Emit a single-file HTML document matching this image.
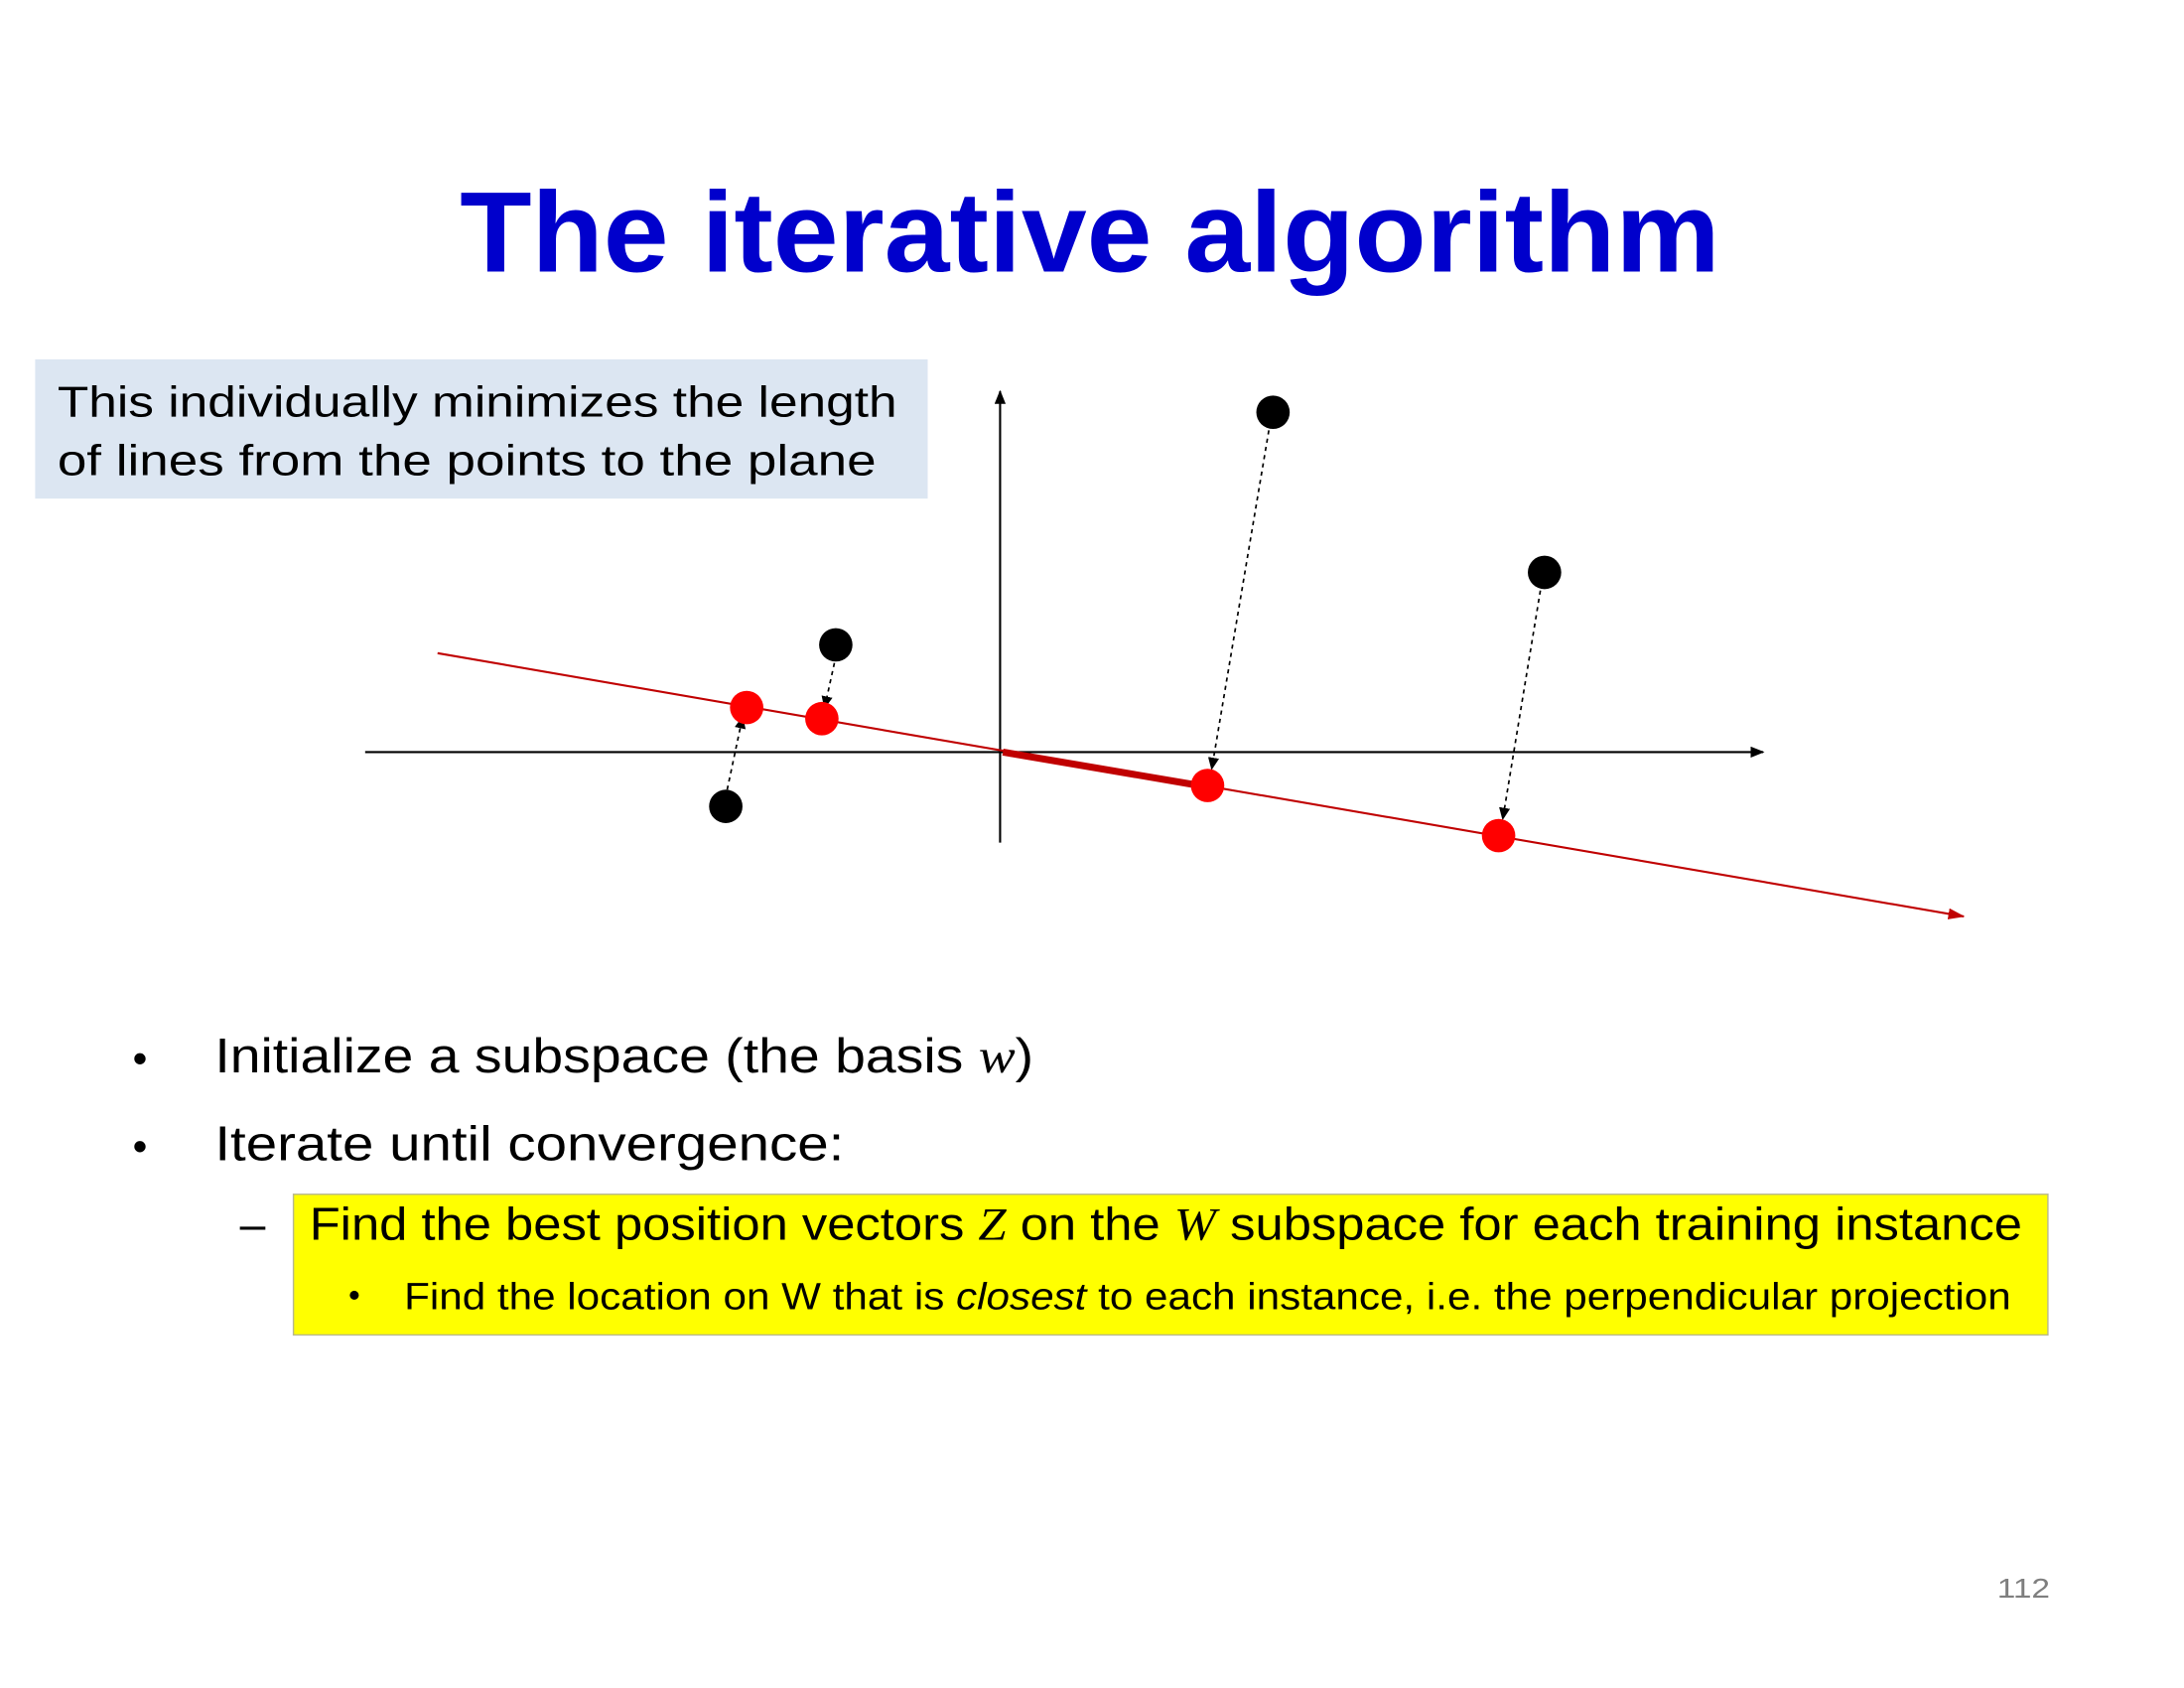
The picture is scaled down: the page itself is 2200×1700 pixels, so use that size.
<!DOCTYPE html>
<html><head><meta charset="utf-8"><style>
html,body{margin:0;padding:0;background:#fff;width:2200px;height:1700px;overflow:hidden}
svg{display:block}
text{font-family:"Liberation Sans",sans-serif}
</style></head><body>
<svg width="2200" height="1700" viewBox="0 0 1568 1212" xmlns="http://www.w3.org/2000/svg">
<defs>
<marker id="ak" markerWidth="10" markerHeight="8" refX="9" refY="4" orient="auto" markerUnits="userSpaceOnUse"><path d="M0,0 L10,4 L0,8z" fill="#000"/></marker>
<marker id="ar" markerWidth="12" markerHeight="8" refX="11" refY="4" orient="auto" markerUnits="userSpaceOnUse"><path d="M0,0 L12,4 L0,8z" fill="#c00000"/></marker>
<marker id="ad" markerWidth="9" markerHeight="8" refX="8" refY="4" orient="auto" markerUnits="userSpaceOnUse"><path d="M0,0 L9,4 L0,8z" fill="#000"/></marker>
</defs>
<rect width="1568" height="1212" fill="#fff"/>
<text x="330" y="195" font-size="82" font-weight="bold" fill="#0000cc" textLength="905" lengthAdjust="spacingAndGlyphs">The iterative algorithm</text>

<rect x="25" y="258" width="641" height="100" fill="#dce6f2"/>
<text x="41" y="299" font-size="31" fill="#000" textLength="603" lengthAdjust="spacingAndGlyphs">This individually minimizes the length</text>
<text x="41" y="341" font-size="31" fill="#000" textLength="588" lengthAdjust="spacingAndGlyphs">of lines from the points to the plane</text>

<line x1="718" y1="605" x2="718" y2="281" stroke="#000" stroke-width="1.5" marker-end="url(#ak)"/>
<line x1="262" y1="540" x2="1266" y2="540" stroke="#000" stroke-width="1.5" marker-end="url(#ak)"/>
<line x1="314" y1="469" x2="1410" y2="658" stroke="#c00000" stroke-width="1.5" marker-end="url(#ar)"/>
<line x1="720" y1="540" x2="867" y2="565" stroke="#c00000" stroke-width="5"/>

<g stroke="#000" stroke-width="1.2" stroke-dasharray="3,3" fill="none">
<line x1="599" y1="476" x2="592" y2="508" marker-end="url(#ad)"/>
<line x1="522" y1="567" x2="533" y2="515" marker-end="url(#ad)"/>
<line x1="911" y1="309" x2="870" y2="552" marker-end="url(#ad)"/>
<line x1="1106" y1="424" x2="1079" y2="588" marker-end="url(#ad)"/>
</g>
<g fill="#ff0000">
<circle cx="536" cy="508" r="12"/><circle cx="590" cy="516" r="12"/>
<circle cx="867" cy="564" r="12"/><circle cx="1076" cy="600" r="12"/>
</g>
<g fill="#000">
<circle cx="600" cy="463" r="12"/><circle cx="521" cy="579" r="12"/>
<circle cx="914" cy="296" r="12"/><circle cx="1109" cy="411" r="12"/>
</g>

<text x="95" y="770" font-size="30">•</text>
<text x="154" y="770" font-size="35" textLength="588" lengthAdjust="spacingAndGlyphs">Initialize a subspace (the basis <tspan font-style="italic" font-family="Liberation Serif">w</tspan>)</text>
<text x="95" y="833" font-size="30">•</text>
<text x="154" y="833" font-size="35" textLength="452" lengthAdjust="spacingAndGlyphs">Iterate until convergence:</text>
<text x="172" y="890" font-size="33">–</text>
<rect x="210.5" y="857.5" width="1260" height="101" fill="#ffff00" stroke="#b8b890" stroke-width="1"/>
<text x="222" y="890" font-size="33" textLength="1230" lengthAdjust="spacingAndGlyphs">Find the best position vectors <tspan font-style="italic" font-family="Liberation Serif">Z</tspan> on the <tspan font-style="italic" font-family="Liberation Serif">W</tspan> subspace for each training instance</text>
<text x="250" y="938" font-size="24">•</text>
<text x="290" y="940" font-size="27" textLength="1154" lengthAdjust="spacingAndGlyphs">Find the location on W that is <tspan font-style="italic">closest</tspan> to each instance, i.e. the perpendicular projection</text>

<text x="1434" y="1147" font-size="20" fill="#7f7f7f" textLength="38" lengthAdjust="spacingAndGlyphs">112</text>
</svg>
</body></html>
